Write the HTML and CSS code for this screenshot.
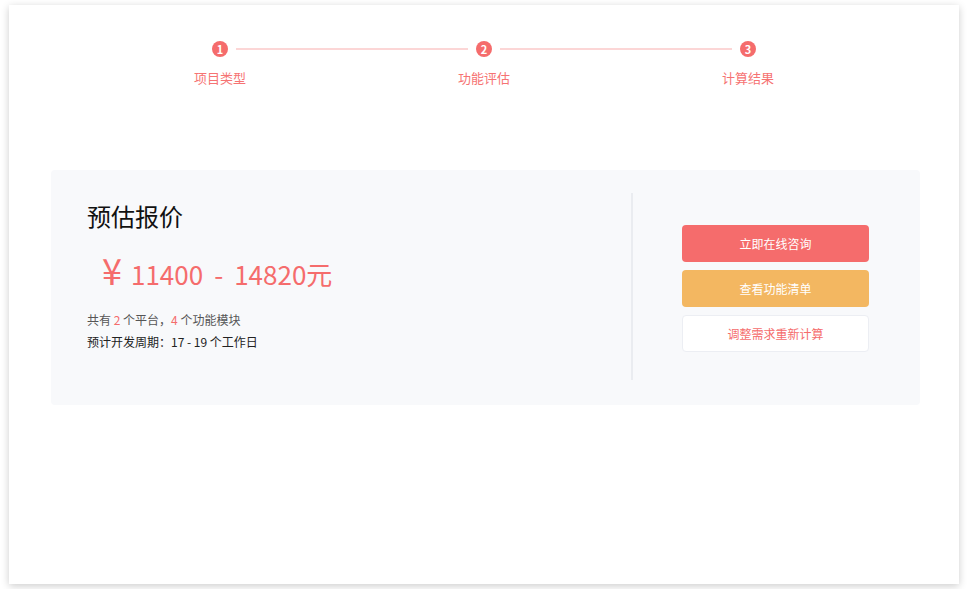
FILE: index.html
```html
<!DOCTYPE html>
<html lang="zh-CN">

<head>
    <meta charset="utf-8">
    <meta name="viewport" content="width=device-width, initial-scale=1.0">
    <title>计算结果</title>
    <link rel="stylesheet" href="styles.css">
</head>

<body>
    <main class="panel">
        <ul class="steps">
            <li class="step first">
                <div class="step-head">
                    <span class="bar"></span>
                    <span class="dot">1</span>
                    <span class="bar"></span>
                </div>
                <p class="step-title">项目类型</p>
            </li>
            <li class="step">
                <div class="step-head">
                    <span class="bar"></span>
                    <span class="dot">2</span>
                    <span class="bar"></span>
                </div>
                <p class="step-title">功能评估</p>
            </li>
            <li class="step last">
                <div class="step-head">
                    <span class="bar"></span>
                    <span class="dot">3</span>
                    <span class="bar"></span>
                </div>
                <p class="step-title">计算结果</p>
            </li>
        </ul>

        <section class="result">
            <div class="quote">
                <h1>预估报价</h1>
                <p class="price"><span class="yen">¥</span>11400<span class="dash">-</span>14820元</p>
                <p class="info">共有 <em>2</em> 个平台，<em>4</em> 个功能模块</p>
                <p class="info dark">预计开发周期：17 - 19 个工作日</p>
            </div>
            <div class="actions">
                <button class="btn red">立即在线咨询</button>
                <button class="btn orange">查看功能清单</button>
                <button class="btn plain">调整需求重新计算</button>
            </div>
        </section>
    </main>
</body></html>
```

FILE: styles.css
```css
* {
    box-sizing: border-box;
}

body {
    margin: 0;
    background: #fff;
    font-family: "Noto Sans CJK SC", "Noto Sans", sans-serif;
}

.panel {
    margin: 5px 9px;
    height: 579px;
    background: #fff;
    box-shadow: 0 2px 8px rgba(0, 0, 0, 0.2);
    padding-top: 36px;
    overflow: hidden;
}

.steps {
    display: flex;
    justify-content: center;
    list-style: none;
    margin: 0;
    padding: 0;
}

.step {
    width: 264px;
}

.step-head {
    display: flex;
    align-items: center;
    height: 16px;
}

.bar {
    flex: 1;
    height: 2px;
    background: #fcd6d6;
}

.first .bar:first-child,
.last .bar:last-child {
    background: transparent;
}

.dot {
    width: 16px;
    height: 16px;
    margin: 0 8px;
    border-radius: 50%;
    background: #f56c6c;
    color: #fff;
    font-size: 11px;
    font-weight: bold;
    line-height: 16px;
    text-align: center;
}

.step-title {
    margin: 12px 0 0 0;
    text-align: center;
    font-size: 13px;
    line-height: 18px;
    color: #f67373;
}

.result {
    display: flex;
    margin: 83px 0 0 42px;
    width: 869px;
    height: 235px;
    padding: 23px 0 25px 0;
    background: #f8f9fb;
    border-radius: 4px;
}

.quote {
    flex: 1;
    padding-left: 36px;
}

h1 {
    margin: 7px 0 0 0;
    font-size: 24px;
    font-weight: normal;
    line-height: 32px;
    color: #111;
}

.price {
    margin: 17px 0 0 15px;
    font-size: 26px;
    line-height: 40px;
    color: #f56c6c;
}

.yen {
    font-size: 36px;
    margin-right: 9px;
}

.dash {
    margin: 0 11px;
}

.info {
    margin: 0;
    font-size: 12px;
    line-height: 22px;
    color: #555;
}

.price + .info {
    margin-top: 15px;
}

.info em {
    font-style: normal;
    color: #f56c6c;
}

.dark {
    color: #222;
}

.actions {
    width: 289px;
    border-left: 2px solid #eaecf0;
    display: flex;
    flex-direction: column;
    align-items: center;
    justify-content: center;
    gap: 8px;
    padding: 3px 51px 0 49px;
}

.btn {
    width: 187px;
    height: 37px;
    border: 1px solid transparent;
    border-radius: 4px;
    font-family: inherit;
    font-size: 12px;
    color: #fff;
    cursor: pointer;
}

.red {
    background: #f56c6c;
}

.orange {
    background: #f3b761;
}

.plain {
    background: #fff;
    border-color: #eceef3;
    color: #f56c6c;
}
```
